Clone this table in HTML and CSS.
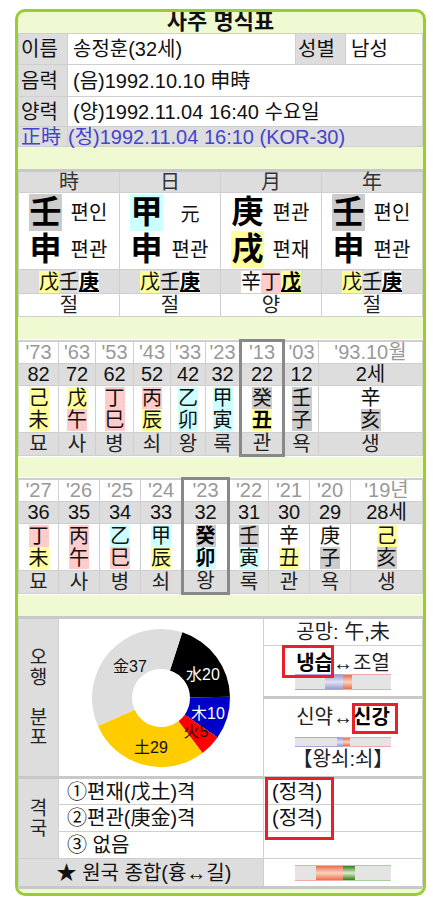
FILE: index.html
```html
<!DOCTYPE html>
<html lang="ko">
<head>
<meta charset="utf-8">
<title>사주 명식표</title>
<link rel="stylesheet" href="styles.css">
</head>
<body>
<div class="card">
  <div class="title">사주 명식표</div>

  <table class="info">
    <colgroup><col class="c49"><col class="c228"><col class="c50"><col></colgroup>
    <tr class="ir1"><td class="lab">이름</td><td class="val">송정훈(32세)</td><td class="lab">성별</td><td class="val">남성</td></tr>
    <tr class="ir2"><td class="lab">음력</td><td class="val" colspan="3">(음)1992.10.10 申時</td></tr>
    <tr class="ir3"><td class="lab">양력</td><td class="val" colspan="3">(양)1992.11.04 16:40 수요일</td></tr>
    <tr class="sj"><td class="lab">正時</td><td class="sjv" colspan="3">(정)1992.11.04 16:10 (KOR-30)</td></tr>
  </table>

  <table class="pillars">
    <tr class="ph"><td>時</td><td>日</td><td>月</td><td>年</td></tr>
    <tr class="pm">
      <td><div class="pgrid"><span class="big wa">壬</span><span class="plab">편인</span><span class="big">申</span><span class="plab">편관</span></div></td>
      <td><div class="pgrid"><span class="big wo">甲</span><span class="plab yuan">元</span><span class="big">申</span><span class="plab">편관</span></div></td>
      <td><div class="pgrid"><span class="big">庚</span><span class="plab">편관</span><span class="big ea">戌</span><span class="plab">편재</span></div></td>
      <td><div class="pgrid"><span class="big wa">壬</span><span class="plab">편인</span><span class="big">申</span><span class="plab">편관</span></div></td>
    </tr>
    <tr class="hid">
      <td><span class="ea">戊</span><span>壬</span><span class="main">庚</span></td>
      <td><span class="ea">戊</span><span>壬</span><span class="main">庚</span></td>
      <td><span class="wh">辛</span><span class="fi">丁</span><span class="main ea">戊</span></td>
      <td><span class="ea">戊</span><span>壬</span><span class="main">庚</span></td>
    </tr>
    <tr class="stg"><td>절</td><td>절</td><td>양</td><td>절</td></tr>
  </table>

  <table class="luck dw">
    <colgroup><col style="width:40px"><col style="width:37px"><col style="width:38px"><col style="width:37px"><col style="width:35px"><col style="width:35px"><col style="width:43px"><col style="width:35px"><col></colgroup>
    <tr class="yr"><td>'73</td><td>'63</td><td>'53</td><td>'43</td><td>'33</td><td>'23</td><td class="hl hlt">'13</td><td>'03</td><td>'93.10월</td></tr>
    <tr class="age"><td>82</td><td>72</td><td>62</td><td>52</td><td>42</td><td>32</td><td class="hl">22</td><td>12</td><td>2세</td></tr>
    <tr class="gz">
      <td><span class="ea">己</span><span class="ea">未</span></td>
      <td><span class="ea">戊</span><span class="fi">午</span></td>
      <td><span class="fi">丁</span><span class="fi">巳</span></td>
      <td><span class="fi">丙</span><span class="ea">辰</span></td>
      <td><span class="wo">乙</span><span class="wo">卯</span></td>
      <td><span class="wo">甲</span><span class="wo">寅</span></td>
      <td class="hl"><span class="wa">癸</span><span class="ea b">丑</span></td>
      <td><span class="wa">壬</span><span class="wa">子</span></td>
      <td><span>辛</span><span class="wa">亥</span></td>
    </tr>
    <tr class="st"><td>묘</td><td>사</td><td>병</td><td>쇠</td><td>왕</td><td>록</td><td class="hl hlb">관</td><td>욕</td><td>생</td></tr>
  </table>

  <table class="luck sw">
    <colgroup><col style="width:40px"><col style="width:41px"><col style="width:41px"><col style="width:42px"><col style="width:46px"><col style="width:40px"><col style="width:41px"><col style="width:41px"><col></colgroup>
    <tr class="yr"><td>'27</td><td>'26</td><td>'25</td><td>'24</td><td class="hl hlt">'23</td><td>'22</td><td>'21</td><td>'20</td><td>'19년</td></tr>
    <tr class="age"><td>36</td><td>35</td><td>34</td><td>33</td><td class="hl">32</td><td>31</td><td>30</td><td>29</td><td>28세</td></tr>
    <tr class="gz">
      <td><span class="fi">丁</span><span class="ea">未</span></td>
      <td><span class="fi">丙</span><span class="fi">午</span></td>
      <td><span class="wo">乙</span><span class="fi">巳</span></td>
      <td><span class="wo">甲</span><span class="ea">辰</span></td>
      <td class="hl"><span class="wa b">癸</span><span class="wo b">卯</span></td>
      <td><span class="wa">壬</span><span class="wo">寅</span></td>
      <td><span>辛</span><span class="ea">丑</span></td>
      <td><span>庚</span><span class="wa">子</span></td>
      <td><span class="ea">己</span><span class="wa">亥</span></td>
    </tr>
    <tr class="st"><td>묘</td><td>사</td><td>병</td><td>쇠</td><td class="hl hlb">왕</td><td>록</td><td>관</td><td>욕</td><td>생</td></tr>
  </table>

  <table class="sum">
    <colgroup><col style="width:40px"><col style="width:205px"><col></colgroup>
    <tr class="s1">
      <td class="vlab" rowspan="3">오<br>행<br><br>분<br>포</td>
      <td class="pie" rowspan="3">
        <svg class="donut" width="150" height="150" viewBox="0 0 150 150">
          <path fill="#000000" d="M96.32 9.37 A69 69 0 0 1 143.99 73.79 L103.99 74.49 A29 29 0 0 0 83.96 47.42 Z"/>
          <path fill="#0000c8" d="M143.99 73.79 A69 69 0 0 1 131.52 114.58 L98.76 91.63 A29 29 0 0 0 103.99 74.49 Z"/>
          <path fill="#ff0000" d="M131.52 114.58 A69 69 0 0 1 116.52 130.10 L92.45 98.16 A29 29 0 0 0 98.76 91.63 Z"/>
          <path fill="#ffcc00" d="M116.52 130.10 A69 69 0 0 1 11.97 103.06 L48.51 86.79 A29 29 0 0 0 92.45 98.16 Z"/>
          <path fill="#dddddd" d="M11.97 103.06 A69 69 0 0 1 96.32 9.37 L83.96 47.42 A29 29 0 0 0 48.51 86.79 Z"/>
          <text class="pl" x="44" y="45">金37</text>
          <text class="pl wt" x="117" y="53">水20</text>
          <text class="pl wt" x="122" y="92">木10</text>
          <text class="pl" x="110" y="110">火5</text>
          <text class="pl" x="65" y="126">土29</text>
        </svg>
      </td>
      <td class="rc gm">공망: 午,未</td>
    </tr>
    <tr class="s2">
      <td class="rc">
        <div class="rt"><b>냉습</b>↔조열</div>
        <div class="bar bar-bp">
          <span class="gap" style="width:30px"></span><span class="seg blue" style="width:18px"></span><span class="seg orange" style="width:9px"></span>
        </div>
      </td>
    </tr>
    <tr class="s3">
      <td class="rc">
        <div class="rt">신약↔<b>신강</b></div>
        <div class="bar thin bar-bp">
          <span class="gap" style="width:42px"></span><span class="seg blue" style="width:6px"></span><span class="seg orange" style="width:7px"></span>
        </div>
        <div class="ws">【왕쇠:쇠】</div>
      </td>
    </tr>
    <tr class="s4">
      <td class="vlab vl2" rowspan="3">격<br>국</td>
      <td class="gk">①편재(戊土)격</td>
      <td class="gk">(정격)</td>
    </tr>
    <tr class="s5">
      <td class="gk">②편관(庚金)격</td>
      <td class="gk">(정격)</td>
    </tr>
    <tr class="s6">
      <td class="gk">③ 없음</td>
      <td></td>
    </tr>
    <tr class="s7">
      <td class="tot" colspan="2">★ 원국 종합(흉↔길)</td>
      <td class="rc">
        <div class="bar bar-pg">
          <span class="gap" style="width:21px"></span><span class="seg orange" style="width:27px"></span><span class="seg green" style="width:12px"></span>
        </div>
      </td>
    </tr>
  </table>

  <div class="mark m1"></div>
  <div class="mark m2"></div>
  <div class="mark m3"></div>
</div>
</body>
</html>
```

FILE: styles.css
```css
* { box-sizing: border-box; }

body {
  margin: 0;
  background: #ffffff;
  font-family: "Liberation Sans", "Noto Sans CJK KR", sans-serif;
  font-size: 20px;
  color: #111;
}

.card {
  position: relative;
  width: 411px;
  height: 887px;
  margin: 9px 0 0 15px;
  border: 3px solid #9acd32;
  border-radius: 10px;
  background: #f0fad2;
  overflow: hidden;
}

.title {
  height: 21px;
  line-height: 19px;
  text-align: center;
  font-size: 22px;
  font-weight: bold;
  color: #111;
}

table {
  width: 405px;
  border-collapse: collapse;
  table-layout: fixed;
  background: #fff;
}

td {
  padding: 0;
  border: 1px solid #cfcfcf;
  vertical-align: middle;
  line-height: 22px;
  white-space: nowrap;
}

/* info */
.c49 { width: 49px; }
.c228 { width: 228px; }
.c50 { width: 50px; }
.info .lab { background: #dddddd; padding-left: 2px; }
.info .val { padding-left: 5px; }
.ir1 { height: 31px; }
.ir2 { height: 32px; }
.ir3 { height: 30px; }
.sj { height: 20px; }
.sj td { background: #dddddd; color: #4444cc; line-height: 18px; }
.sj .sjv { padding-left: 0; }

/* pillars */
.pillars { margin-top: 22px; border-top: 3px solid #c8c8c8; }
.pillars td { text-align: center; }
.ph td { height: 21px; background: #dddddd; color: #333; line-height: 20px; }
.pm td { height: 77px; }
.pgrid {
  display: grid;
  grid-template-columns: 33px 40px;
  grid-template-rows: 37px 37px;
  column-gap: 7px;
  justify-content: center;
  align-items: center;
}
.big {
  display: block;
  width: 33px;
  height: 37px;
  font-size: 32px;
  font-weight: bold;
  line-height: 37px;
  text-align: center;
  color: #000;
}
.plab { font-size: 20px; line-height: 22px; color: #111; }
.yuan { font-size: 19px; padding-top: 4px; }
.hid td { height: 24px; background: #dddddd; line-height: 22px; }
.hid span { display: inline-block; line-height: 22px; }
.hid .main { font-weight: bold; text-decoration: underline; background: #fff; color: #000; }
.hid .main.ea { background: #ffff99; }
.stg td { height: 23px; background: #fff; line-height: 21px; color: #222; }

/* element colours */
.wo { background: #ccffff; }
.fi { background: #ffcccc; }
.ea { background: #ffff99; }
.wa { background: #cccccc; }
.wh { background: #ffffff; }
.b { font-weight: bold; color: #000; }

/* luck tables */
.luck { border-top: 2px solid #cfcfcf; }
.dw { margin-top: 22px; }
.sw { margin-top: 20px; }
.luck td { text-align: center; }
.yr td { height: 23px; color: #999; line-height: 21px; }
.age td { height: 22px; background: #dddddd; color: #111; line-height: 21px; }
.gz td { height: 47px; }
.gz span { display: block; width: 20px; height: 22px; line-height: 22px; margin: 0 auto; }
.st td { height: 23px; background: #dddddd; line-height: 21px; color: #222; }
.hl { border-left: 3px solid #888; border-right: 3px solid #888; }
.hlt { border-top: 3px solid #888; }
.hlb { border-bottom: 3px solid #888; }

/* summary */
.sum { margin-top: 21px; border-top: 3px solid #c8c8c8; border-bottom: 3px solid #c8c8c8; }
.vlab { background: #dddddd; text-align: center; font-size: 19px; line-height: 20px; color: #222; }
.pie { text-align: center; background: #fff; }
.donut { display: block; margin: 0 auto; }
.pl { font-family: "Liberation Sans", "Noto Sans CJK KR", sans-serif; font-size: 16px; text-anchor: middle; dominant-baseline: middle; fill: #111; }
.pl.wt { fill: #fff; }
.rc { text-align: center; color: #222; }
.s1 { height: 28px; }
.s2 { height: 52px; }
.s3 { height: 80px; }
.s3 .rc { border-top: 3px solid #c8c8c8; }
.rt { line-height: 22px; }
.rt b { color: #000; }
.ws { line-height: 22px; margin-top: 1px; }
.s4 td { border-top: 3px solid #c8c8c8; }
.s4 { height: 27px; }
.s5 { height: 27px; }
.s6 { height: 27px; }
.s7 { height: 29px; }
.gk { padding-left: 8px; line-height: 22px; }
.tot { background: #dddddd; text-align: center; padding-left: 6px; }

.bar {
  display: flex;
  width: 96px;
  height: 16px;
  margin: 0 auto;
  background: #e4e4e4;
  border-top: 1px solid;
  border-bottom: 1px solid;
}
.bar.thin { height: 10px; margin-top: 9px; }
.bar-bp { border-image: linear-gradient(to right, #a8a8e0 50%, #f2a8a8 50%) 1; }
.bar-pg { border-image: linear-gradient(to right, #f4a8a8 50%, #a8d0a0 50%) 1; }
.gap { display: block; }
.seg { display: block; height: 100%; }
.blue { background: linear-gradient(#9c9cd0, #e2e2f6 50%, #9c9cd0); }
.orange { background: linear-gradient(#e87048, #fcd2c2 50%, #e87048); }
.green { background: linear-gradient(#3c7c1c, #d8ecc8 50%, #3c7c1c); }

/* annotation boxes */
.mark { position: absolute; border: 3px solid #e8202a; }
.m1 { left: 264px; top: 633px; width: 52px; height: 33px; }
.m2 { left: 334px; top: 691px; width: 46px; height: 31px; }
.m3 { left: 247px; top: 765px; width: 69px; height: 63px; }
```
